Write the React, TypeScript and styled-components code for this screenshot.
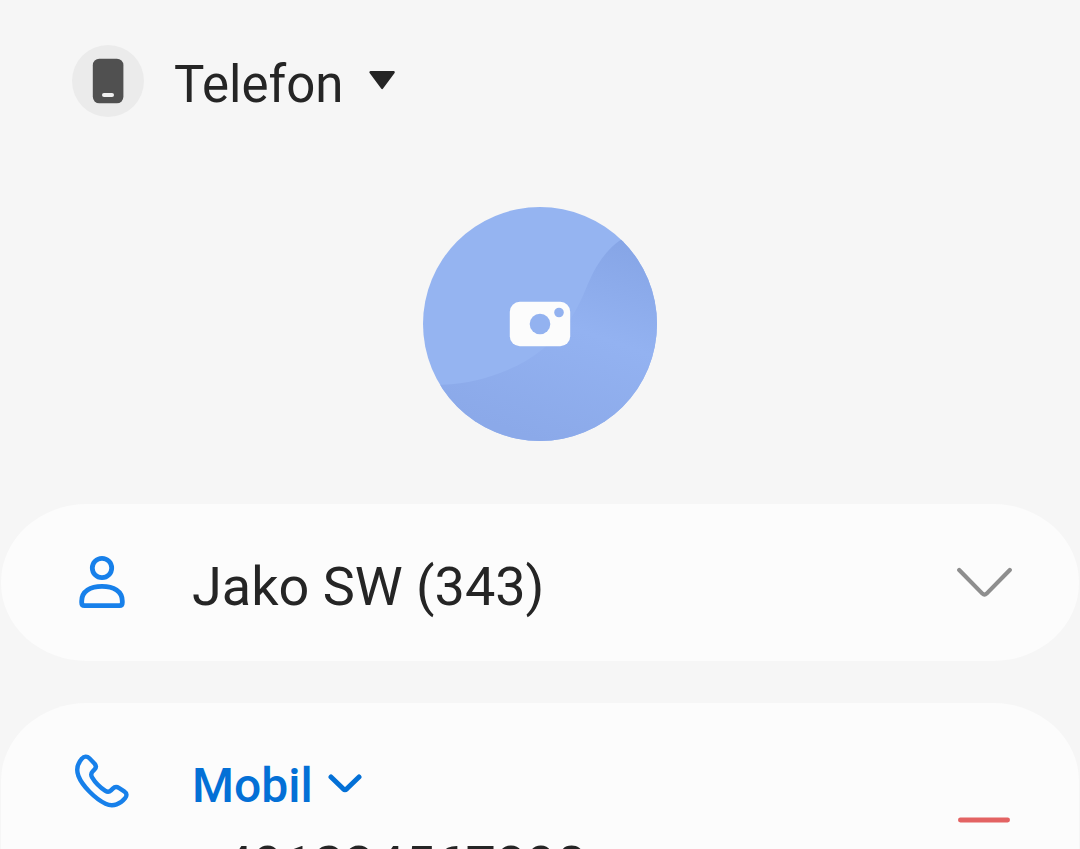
import React, { useState } from "react";
import styled, { createGlobalStyle, css } from "styled-components";

const GlobalStyle = createGlobalStyle`
  *, *::before, *::after { box-sizing: border-box; }
  body {
    margin: 0;
    background: #f6f6f6;
    color: #252525;
    font-family: Roboto, "Liberation Sans", sans-serif;
  }
  svg { display: block; flex: none; }
`;

const Page = styled.main`
  height: 100vh;
  overflow: hidden;
  display: flex;
  flex-direction: column;
`;

const plainControl = css`
  margin: 0;
  padding: 0;
  border: 0;
  background: none;
  color: inherit;
  font: inherit;
`;

const StorageBar = styled.header`
  flex: none;
  display: flex;
  align-items: center;
  gap: 30px;
  padding: 45px 72px 0;
`;

const StorageBadge = styled.span`
  display: grid;
  place-items: center;
  width: 72px;
  height: 72px;
  border-radius: 50%;
  background: #ebebeb;
`;

const SelectWrap = styled.label<{ $gap: number }>`
  display: flex;
  align-items: center;
  gap: ${(p) => p.$gap}px;
`;

const Select = styled.select<{ $size: number; $weight: number }>`
  ${plainControl}
  appearance: none;
  field-sizing: content;
  padding-top: 8px;
  font-size: ${(p) => p.$size}px;
  font-weight: ${(p) => p.$weight};
  line-height: 60px;
`;

const TypeSelect = styled(Select)`
  padding-top: 4px;
  color: #0370d6;
`;

const AvatarButton = styled.button`
  ${plainControl}
  flex: none;
  align-self: center;
  margin: 90px 0 63px;
  border-radius: 50%;
  cursor: pointer;
`;

const Cards = styled.form`
  flex: none;
  display: flex;
  flex-direction: column;
  gap: 42px;
  padding: 0 1px;
`;

const Card = styled.section`
  display: flex;
  align-items: flex-start;
  gap: 60px;
  min-height: 157px;
  padding: 0 67px 0 71px;
  border-radius: 86px / 78px;
  background: #fcfcfc;
`;

const IconCell = styled.span`
  flex: none;
  display: grid;
  place-items: center;
  width: 60px;
  height: 156px;
`;

const Fields = styled.div`
  flex: 1;
  min-width: 0;
  display: flex;
  flex-direction: column;
  align-items: flex-start;
  gap: 16px;
  padding: 49px 0 40px;
`;

const TextInput = styled.input`
  ${plainControl}
  width: 100%;
  height: 65px;
  padding-top: 1px;
  font-size: 54px;
  line-height: 64px;
  outline: none;
`;

const IconButton = styled.button<{ $height: number }>`
  ${plainControl}
  flex: none;
  display: grid;
  place-items: center;
  width: 56px;
  height: ${(p) => p.$height}px;
  cursor: pointer;
`;

const DeviceIcon = () => (
  <svg width="32" height="46" viewBox="0 0 32 46" aria-hidden="true">
    <rect x="0.8" y="0.7" width="30.6" height="44.6" rx="6.5" fill="#505050" />
    <rect x="10" y="35" width="12" height="4" rx="2" fill="#f0f0f0" />
  </svg>
);

const CaretIcon = () => (
  <svg width="28" height="20" viewBox="0 0 28 20" aria-hidden="true">
    <path
      d="M1.6 1.2H24.6L13.1 16.9Z"
      fill="#252525"
      stroke="#252525"
      strokeWidth="2.4"
      strokeLinejoin="round"
    />
  </svg>
);

const AvatarArt = () => (
  <svg width="234" height="234" viewBox="0 0 234 234" aria-hidden="true">
    <defs>
      <clipPath id="avatar-disc">
        <circle cx="117" cy="117" r="117" />
      </clipPath>
      <linearGradient
        id="avatar-wave"
        gradientUnits="userSpaceOnUse"
        x1="202"
        y1="33"
        x2="130"
        y2="238"
      >
        <stop offset="0" stopColor="#86a5e6" />
        <stop offset="0.46" stopColor="#93b2f1" />
        <stop offset="1" stopColor="#8ba9e9" />
      </linearGradient>
    </defs>
    <g clipPath="url(#avatar-disc)">
      <rect width="234" height="234" fill="#95b4f1" />
      <path
        d="M206 28C190 36 179 49 170 66C162 82 158 97 146 114C130 137 107 155 77 166C56 174 36 178 10 178V234H234V28Z"
        fill="url(#avatar-wave)"
      />
    </g>
    <rect x="86.8" y="94.8" width="60.4" height="44.4" rx="10" fill="#fcfcfc" />
    <circle cx="117" cy="117" r="10.3" fill="#93b2f0" />
    <circle cx="136" cy="105.5" r="4.8" fill="#93b2f0" />
  </svg>
);

const PersonIcon = () => (
  <svg
    width="48"
    height="54"
    viewBox="0 0 48 54"
    fill="none"
    stroke="#1780ea"
    strokeWidth="4.8"
    aria-hidden="true"
  >
    <circle cx="24" cy="13" r="9.7" />
    <path d="M6.5 50.6H41.5Q44.3 50.6 44.3 47.8V46C44.3 36 35.5 31.3 24 31.3S3.7 36 3.7 46V47.8Q3.7 50.6 6.5 50.6Z" />
  </svg>
);

const PhoneIcon = () => (
  <svg
    width="54"
    height="54"
    viewBox="0 0 54 54"
    fill="none"
    stroke="#1780ea"
    strokeWidth="4.4"
    strokeLinejoin="round"
    aria-hidden="true"
  >
    <path d="M7 4.6C9 2.2 12.2 2 14.4 4.2L19.4 9.4C21.4 11.6 21.4 13.6 19.5 15.6L17.6 17.6C15.9 19.4 15.8 21.2 17.1 23.4C20.2 28.6 25 33.4 30.4 36.9C32.4 38.2 34.4 38 36 36.4L37.8 34.6C39.7 32.7 41.8 32.6 44.2 34.1L49.2 37.3C51.9 39.1 52.1 41.7 50.1 44.2C45.7 49.8 38.4 53.3 30.6 49.8C20.4 45 7.2 31.9 3.4 21.9C1 15.4 2.4 9.6 7 4.6Z" />
  </svg>
);

const ExpandIcon = () => (
  <svg
    width="56"
    height="32"
    viewBox="0 0 56 32"
    fill="none"
    stroke="#8e8e8e"
    strokeWidth="4.2"
    strokeLinecap="round"
    strokeLinejoin="round"
    aria-hidden="true"
  >
    <path d="M3.2 4L26.4 27.6Q28.5 29.6 30.6 27.6L53.8 4" />
  </svg>
);

const TypeChevron = () => (
  <svg
    width="34"
    height="20"
    viewBox="0 0 34 20"
    fill="none"
    stroke="#0370d6"
    strokeWidth="5"
    strokeLinecap="round"
    strokeLinejoin="round"
    aria-hidden="true"
  >
    <path d="M3 3L15.2 14.8Q17 16.4 18.8 14.8L31 3" />
  </svg>
);

const RemoveIcon = () => (
  <svg width="52" height="6" viewBox="0 0 52 6" aria-hidden="true">
    <rect y="0.6" width="52" height="4.8" rx="2.4" fill="#e36363" />
  </svg>
);

export default function App() {
  const [name, setName] = useState("Jako SW (343)");
  const [number, setNumber] = useState("+491234567890");

  return (
    <>
      <GlobalStyle />
      <Page>
        <StorageBar>
          <StorageBadge>
            <DeviceIcon />
          </StorageBadge>
          <SelectWrap $gap={26}>
            <Select $size={51} $weight={400} aria-label="Speicherort">
              <option>Telefon</option>
            </Select>
            <CaretIcon />
          </SelectWrap>
        </StorageBar>

        <AvatarButton type="button" aria-label="Foto">
          <AvatarArt />
        </AvatarButton>

        <Cards>
          <Card>
            <IconCell>
              <PersonIcon />
            </IconCell>
            <Fields>
              <TextInput
                aria-label="Name"
                value={name}
                onChange={(e) => setName(e.target.value)}
              />
            </Fields>
            <IconButton type="button" $height={156} aria-label="Mehr">
              <ExpandIcon />
            </IconButton>
          </Card>

          <Card>
            <IconCell>
              <PhoneIcon />
            </IconCell>
            <Fields>
              <SelectWrap $gap={15}>
                <TypeSelect $size={48} $weight={500} aria-label="Typ">
                  <option>Mobil</option>
                </TypeSelect>
                <TypeChevron />
              </SelectWrap>
              <TextInput
                type="tel"
                aria-label="Telefonnummer"
                value={number}
                onChange={(e) => setNumber(e.target.value)}
              />
            </Fields>
            <IconButton type="button" $height={234} aria-label="Entfernen">
              <RemoveIcon />
            </IconButton>
          </Card>
        </Cards>
      </Page>
    </>
  );
}
